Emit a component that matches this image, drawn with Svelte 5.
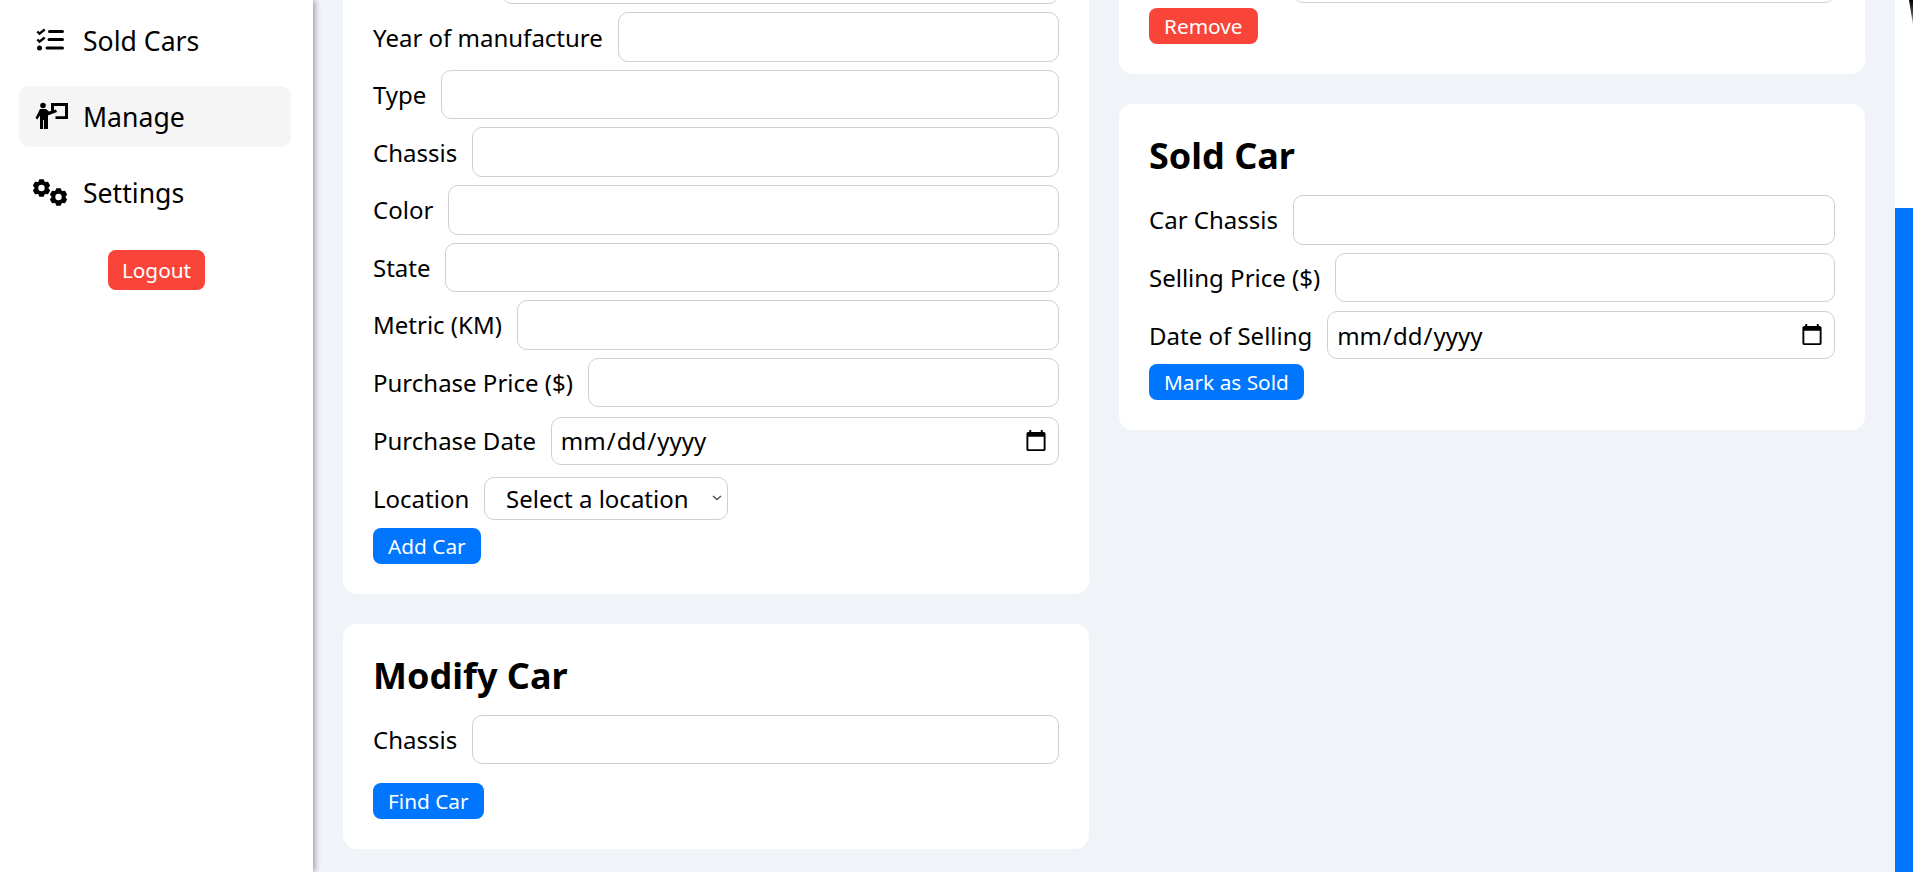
<script>
  const addRows = [
    { label: 'Year of manufacture' },
    { label: 'Type' },
    { label: 'Chassis' },
    { label: 'Color' },
    { label: 'State' },
    { label: 'Metric (KM)' },
    { label: 'Purchase Price ($)' }
  ];

  function gear(cx, cy, outer, root, hole) {
    const pts = [];
    for (let i = 0; i < 6; i++) {
      const a = (Math.PI / 3) * i - Math.PI / 2;
      const spread = [-0.48, -0.24, 0.24, 0.48];
      const radius = [root, outer, outer, root];
      spread.forEach((s, k) => {
        pts.push(`${(cx + radius[k] * Math.cos(a + s)).toFixed(2)} ${(cy + radius[k] * Math.sin(a + s)).toFixed(2)}`);
      });
    }
    return `M${pts.join('L')}Z M${cx - hole} ${cy}a${hole} ${hole} 0 1 0 ${hole * 2} 0a${hole} ${hole} 0 1 0 ${-hole * 2} 0Z`;
  }

  const gearA = gear(6.5, 9, 9, 7, 3.2);
  const gearB = gear(23.5, 18, 9, 7, 3.2);
</script>

<div class="page">
  <aside class="sidebar">
    <nav class="nav">
      <a class="item" href="#sold">
        <svg class="icon" viewBox="0 0 34 28" aria-hidden="true">
          <path class="stroke" d="M2.300 4.500 4.500 6.700 9.700 2.500M2.300 12.500 4.500 14.700 9.700 10.500" />
          <circle cx="4.500" cy="21" r="2.500" />
          <path class="bar" d="M14.500 4.500h13M14 12.500h13.500M12 21h15.500" />
        </svg>
        <span>Sold Cars</span>
      </a>
      <a class="item active" href="#manage">
        <svg class="icon" viewBox="0 0 34 28" aria-hidden="true">
          <circle cx="8" cy="2.500" r="2.800" />
          <path d="M5 6h6l3 2.500 7-2 1 2.500-8.500 3.200-.5-.2V26H8.900V17H8v9H5V12.500L2.300 16.500.5 15z" />
          <path d="M16 0H33V16H20.500V13.200H30V3H19V9H16z" />
        </svg>
        <span>Manage</span>
      </a>
      <a class="item" href="#settings">
        <svg class="icon" viewBox="0 0 34 28" aria-hidden="true">
          <path fill-rule="evenodd" d={gearA} />
          <path fill-rule="evenodd" d={gearB} />
        </svg>
        <span>Settings</span>
      </a>
    </nav>
    <button class="btn red logout" type="button">Logout</button>
  </aside>

  <main class="main">
    <div class="column">
      <section class="card cut-left">
        <div class="row clipped"><input class="field offset-left" type="text" aria-label="Previous field" /></div>
        {#each addRows as row}
          <label class="row">
            <span>{row.label}</span>
            <input class="field" type="text" />
          </label>
        {/each}
        <label class="row date-row">
          <span>Purchase Date</span>
          <input class="field date" type="date" />
        </label>
        <label class="row select-row">
          <span>Location</span>
          <select class="select">
            <option>Select a location</option>
          </select>
        </label>
        <button class="btn blue" type="button">Add Car</button>
      </section>

      <section class="card">
        <h2>Modify Car</h2>
        <label class="row find">
          <span>Chassis</span>
          <input class="field" type="text" />
        </label>
        <button class="btn blue" type="button">Find Car</button>
      </section>
    </div>

    <div class="column">
      <section class="card cut-right">
        <div class="row clipped tight"><input class="field offset" type="text" aria-label="Previous field" /></div>
        <button class="btn red" type="button">Remove</button>
      </section>

      <section class="card">
        <h2>Sold Car</h2>
        <label class="row">
          <span>Car Chassis</span>
          <input class="field" type="text" />
        </label>
        <label class="row">
          <span>Selling Price ($)</span>
          <input class="field" type="text" />
        </label>
        <label class="row sold-date">
          <span>Date of Selling</span>
          <input class="field date" type="date" />
        </label>
        <button class="btn blue" type="button">Mark as Sold</button>
      </section>
    </div>
  </main>

  <div class="scrollbar"><div class="thumb"></div></div>
</div>

<style>
  :global(body) {
    margin: 0;
    background: #f0f3f8;
    font-family: "Noto Sans", "Open Sans", sans-serif;
    color: #000;
  }

  .page {
    display: flex;
    height: 872px;
    overflow: hidden;
    background: #f0f3f8;
  }

  .sidebar {
    flex: 0 0 313px;
    display: flex;
    flex-direction: column;
    align-items: center;
    background: #fff;
    box-shadow: 2px 0 6px rgba(0, 0, 0, 0.35);
    position: relative;
    z-index: 1;
    padding-top: 10px;
    box-sizing: border-box;
  }

  .nav {
    align-self: stretch;
    display: flex;
    flex-direction: column;
    gap: 15px;
    padding: 0 22px 0 19px;
  }

  .item {
    display: flex;
    align-items: center;
    height: 61px;
    padding-left: 16px;
    border-radius: 10px;
    color: #000;
    text-decoration: none;
    font-size: 26.600px;
  }

  .item span {
    padding-top: 1px;
  }

  .item.active {
    background: #f5f5f5;
  }

  .icon {
    width: 34px;
    height: 28px;
    margin-right: 14px;
    flex: none;
    fill: #000;
    overflow: visible;
  }

  .stroke {
    fill: none;
    stroke: #000;
    stroke-width: 2.400;
  }

  .bar {
    fill: none;
    stroke: #000;
    stroke-width: 3;
    stroke-linecap: round;
  }

  .main {
    flex: 1;
    display: flex;
    gap: 30px;
    padding: 0 30px;
    min-width: 0;
  }

  .column {
    flex: 1;
    min-width: 0;
    display: flex;
    flex-direction: column;
    gap: 30px;
  }

  .card {
    background: #fff;
    border-radius: 14px;
    padding: 30px;
  }

  .cut-left {
    margin-top: -45.400px;
    padding-top: 0;
  }

  .cut-right {
    margin-top: -46.600px;
    padding-top: 0;
  }

  h2 {
    margin: 0 0 18px;
    font-size: 36px;
    line-height: 43px;
    font-weight: 700;
  }

  .row {
    display: flex;
    align-items: center;
    gap: 14.800px;
    margin-bottom: 8px;
    font-size: 24px;
  }

  .tight {
    margin-bottom: 5px;
  }

  .row span {
    white-space: nowrap;
  }

  .field {
    flex: 1;
    min-width: 0;
    height: 49.600px;
    box-sizing: border-box;
    border: 1.500px solid #d0d0d0;
    border-radius: 10px;
    background: #fff;
    padding: 0 8px;
    font: inherit;
    color: #000;
    outline: none;
  }

  .offset {
    margin-left: 144px;
  }

  .offset-left {
    margin-left: 129px;
  }

  .date {
    height: 48px;
  }

  .date-row {
    margin-top: 9.200px;
  }

  .select {
    height: 43px;
    width: 244px;
    box-sizing: border-box;
    border: 1.500px solid #d0d0d0;
    border-radius: 10px;
    background: #fff url("data:image/svg+xml,%3Csvg xmlns='http://www.w3.org/2000/svg' width='10' height='6'%3E%3Cpath d='M1 1l4 3.500L9 1' fill='none' stroke='%23555' stroke-width='1.500'/%3E%3C/svg%3E") no-repeat right 5px center;
    appearance: none;
    padding: 0 8px 0 21px;
    font: inherit;
    color: #000;
  }

  .select-row {
    margin-top: 12px;
  }

  .find {
    margin-bottom: 19px;
  }

  .sold-date {
    margin-top: 9px;
    margin-bottom: 5px;
  }

  .btn {
    display: block;
    height: 36px;
    padding: 0 15px;
    border: none;
    border-radius: 8px;
    color: #fff;
    font-family: inherit;
    font-size: 20.800px;
    cursor: pointer;
  }

  .btn.logout {
    margin-top: 27px;
    height: 40px;
    padding: 0 13.500px;
  }

  .blue {
    background: #0076ff;
  }

  .red {
    background: #f94439;
  }

  .scrollbar {
    flex: 0 0 18px;
    display: flex;
    background: #fff;
    padding-top: 208px;
    box-sizing: border-box;
    position: relative;
  }

  .scrollbar::before {
    content: "";
    position: absolute;
    top: 0;
    right: 0;
    width: 4px;
    height: 25px;
    background: linear-gradient(#000, #555 60%, #ccc);
    clip-path: polygon(0 0, 100% 0, 100% 100%);
  }

  .thumb {
    flex: 1;
    background: #0076ff;
  }
</style>
